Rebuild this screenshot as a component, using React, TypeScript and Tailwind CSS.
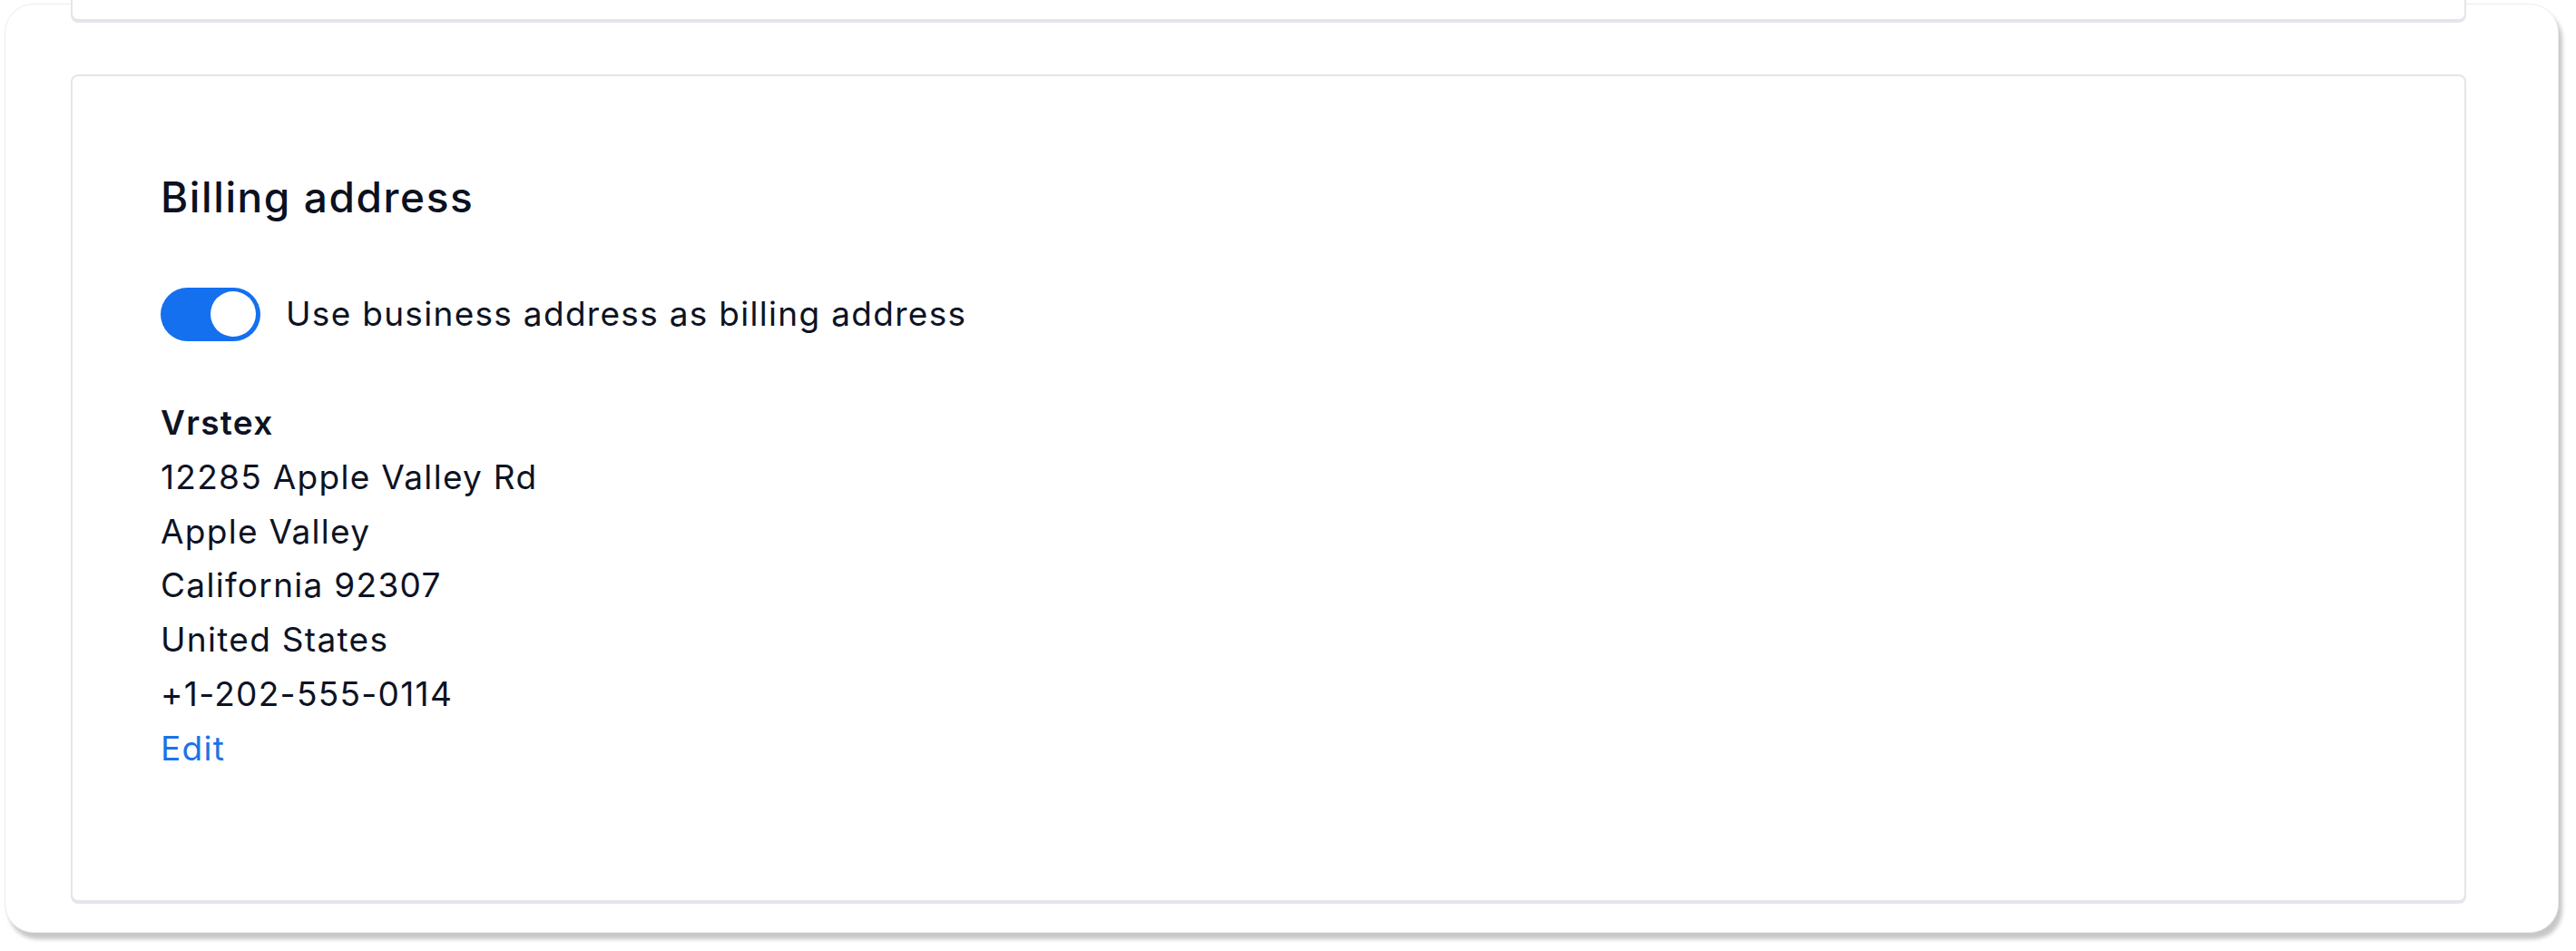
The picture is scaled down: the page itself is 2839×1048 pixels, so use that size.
export default function App() {
  const lines = [
    "12285 Apple Valley Rd",
    "Apple Valley",
    "California 92307",
    "United States",
    "+1-202-555-0114",
  ];

  return (
    <div className="h-[1048px] w-full bg-white pt-[4px] pl-[5px] pr-[19px] pb-[20px] font-['Inter',sans-serif] text-[#0d1324]">
      <div className="flex h-full flex-col rounded-[32px] border border-[#ececec] bg-white pl-[72px] pr-[101px] shadow-[4px_7px_4px_rgba(0,0,0,0.22)]">
        {/* previous card, scrolled mostly out of view */}
        <div className="-mt-[40px] h-[58px] shrink-0 rounded-[8px] border-2 border-[#e4e4ec] bg-white shadow-[0_2px_0_#e6e6ee]" />

        {/* Billing address card */}
        <div className="mt-[59px] flex h-[912px] shrink-0 flex-col rounded-[8px] border-2 border-[#e4e4ec] bg-white px-[97px] pt-[102px] shadow-[0_2px_0_#e6e6ee]">
          <h2 className="text-[46px] leading-[62px] font-medium tracking-[1.6px] text-[#0b1120]">
            Billing address
          </h2>

          <div className="mt-[68px] flex items-center gap-[28px]">
            <button className="flex h-[59px] w-[110px] items-center justify-end rounded-full bg-[#1570ef] px-[5px]">
              <span className="h-[50px] w-[50px] rounded-full bg-white" />
            </button>
            <span className="text-[37px] leading-[60px] tracking-[1.3px]">
              Use business address as billing address
            </span>
          </div>

          <div className="mt-[60px] flex flex-col text-[37px] leading-[59.8px] tracking-[1.3px]">
            <span className="font-semibold">Vrstex</span>
            {lines.map((l) => (
              <span key={l}>{l}</span>
            ))}
            <a className="w-fit cursor-pointer text-[#1b73e8]">Edit</a>
          </div>
        </div>
      </div>
    </div>
  );
}
